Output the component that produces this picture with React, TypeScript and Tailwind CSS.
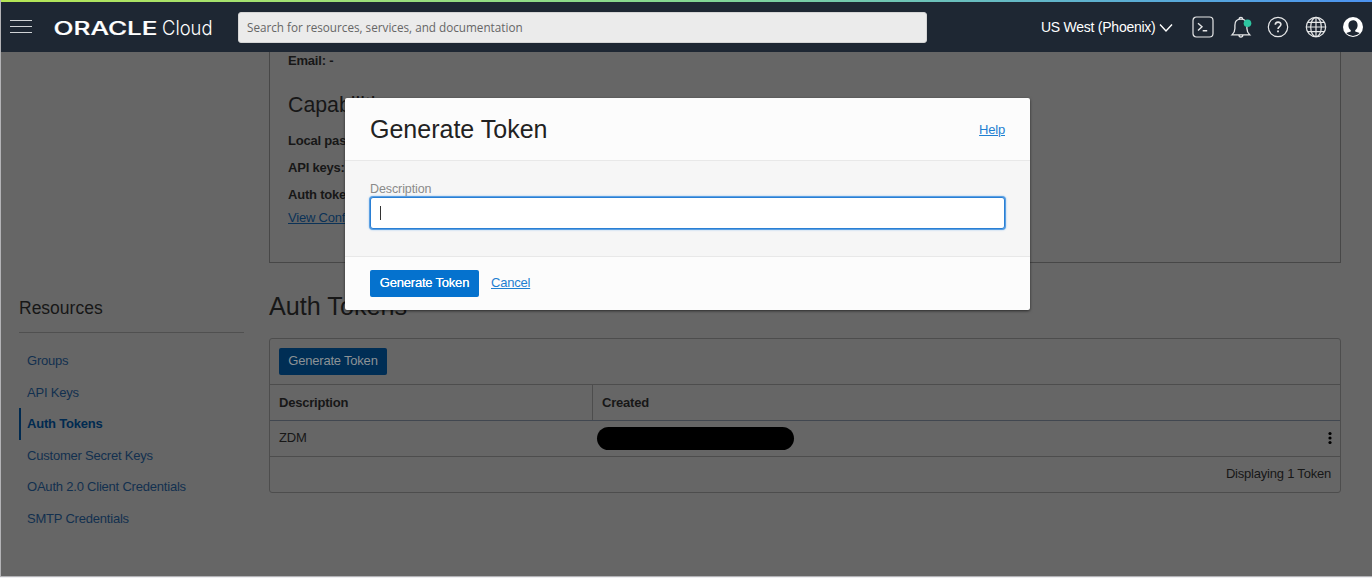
import React from "react";

const links = [
  { label: "Groups" },
  { label: "API Keys" },
  { label: "Auth Tokens", active: true },
  { label: "Customer Secret Keys" },
  { label: "OAuth 2.0 Client Credentials" },
  { label: "SMTP Credentials" },
];

function Header() {
  return (
    <header className="flex h-[50px] shrink-0 items-center bg-[#1e2733] text-white">
      <button aria-label="Menu" className="ml-[9px] flex w-[22px] flex-col gap-[5px] pb-px">
        <span className="h-px bg-[#d0d3d6]" />
        <span className="h-px bg-[#d0d3d6]" />
        <span className="h-px bg-[#d0d3d6]" />
      </button>
      <svg className="ml-[22px] shrink-0 overflow-visible" width="162" height="34" viewBox="0 0 162 34" fill="#fff">
        <text transform="translate(-0.500 24.500) scale(1.3 1)" fontFamily="Inter, sans-serif" fontSize="18" fontWeight="500" textLength="80" lengthAdjust="spacingAndGlyphs" stroke="#fff" strokeWidth="0.2">ORACLE</text>
        <text x="108" y="24.500" fontFamily="Inter, sans-serif" fontSize="20" fontWeight="300" textLength="50.500" lengthAdjust="spacingAndGlyphs">Cloud</text>
      </svg>
      <div className="ml-[22px] flex h-[31px] w-[689px] shrink-0 items-center rounded-[3px] border border-[#d5d5d5] bg-[#ebebeb] px-2 pt-[2px] font-['Open_Sans',sans-serif] text-[13px] text-[#666]">
        <span className="origin-left scale-x-[0.9] whitespace-nowrap">Search for resources, services, and documentation</span>
      </div>
      <div className="ml-[114px] flex items-center whitespace-nowrap text-[14px] tracking-[-0.25px]">
        <span className="w-[115px]">US West (Phoenix)</span>
        <svg className="ml-[3px] mt-[2px]" width="14" height="10" viewBox="0 0 14 10" fill="none" stroke="#fff" strokeWidth="1.4"><path d="M1 1.500 7 8l6-6.500" /></svg>
      </div>
      <div className="ml-[19px] flex shrink-0 items-center gap-[15.500px]">
        <svg width="22" height="22" viewBox="0 0 22 22" fill="none" stroke="#e6e7e8" strokeWidth="1.2"><rect x="1" y="1" width="20" height="20" rx="3.500" /><path d="m6 7.200 4 3.600-4 3.700M10.700 14.700h4.500" strokeWidth="1.400" /></svg>
        <svg className="overflow-visible" width="22" height="22" viewBox="0 0 22 22" fill="none" stroke="#e6e7e8" strokeWidth="1.3"><path d="M2 18.900h17.800c-2-2-2.900-4-2.900-6.500V9.200c0-3.700-2.300-6-6-6s-6 2.300-6 6v3.200c0 2.500-.9 4.500-2.900 6.500ZM9.100 3.300c0-2.700 3.600-2.700 3.600 0M8.900 19c.2 2.700 3.800 2.700 4 0" /><circle cx="17.500" cy="7.300" r="3.800" fill="#2dc5a0" stroke="none" /></svg>
        <svg width="22" height="22" viewBox="0 0 22 22" fill="none" stroke="#e6e7e8" strokeWidth="1.2"><circle cx="11" cy="11" r="9.700" /><path d="M8.300 8.800c0-3.700 5.600-3.500 5.600-.2 0 2-2.900 2.100-2.900 4.400" strokeWidth="1.600" /><path d="M11 14.500v1.700" strokeWidth="1.800" /></svg>
        <svg width="22" height="22" viewBox="0 0 22 22" fill="none" stroke="#e6e7e8" strokeWidth="1.2"><circle cx="11" cy="11" r="9.700" /><ellipse cx="11" cy="11" rx="5.300" ry="9.700" /><path d="M11 1.300v19.400M1.300 11h19.400M2.700 6.300h16.600M2.700 15.700h16.600" /></svg>
        <svg width="22" height="22" viewBox="0 0 22 22"><circle cx="11" cy="11" r="10" fill="#fff" /><path d="M11 4.200c-3.100 0-4.600 2.200-4.600 5 0 2.100.9 4 2.400 5v1.200l-4.500 1.700c3.700 3.700 9.700 3.700 13.400 0l-4.500-1.700v-1.200c1.500-1 2.400-2.900 2.400-5 0-2.800-1.500-5-4.600-5Z" fill="#1e2733" /></svg>
      </div>
    </header>
  );
}

function Sidebar() {
  return (
    <aside className="ml-[18px] w-[225px] shrink-0 pt-[242px]">
      <h2 className="h-[39px] border-b border-[#505050] text-[17.500px] leading-[28px] text-[#171717]">Resources</h2>
      <nav className="mt-[12px] text-[13px] tracking-[-0.21px] text-[#12304f]">
        {links.map((link) => (
          <a
            key={link.label}
            className={
              link.active
                ? "flex h-[31.500px] items-center border-l-2 border-[#002a50] pl-[6px] font-bold text-[#002a50]"
                : "flex h-[31.500px] items-center pl-2"
            }
          >
            {link.label}
          </a>
        ))}
      </nav>
    </aside>
  );
}

function Details() {
  return (
    <section className="h-[211px] border border-t-0 border-[#474747] pl-[18px] pt-px text-[13px] font-bold tracking-[-0.2px] text-[#171717]">
      <p className="h-[15px] leading-[15px]">Email: -</p>
      <h2 className="mt-[23px] h-[28px] text-[21.300px] font-normal leading-[28px] tracking-normal">Capabilities</h2>
      <p className="mt-[11px] leading-[22px]">Local pass</p>
      <p className="mt-[5px] leading-[22px]">API keys:</p>
      <p className="mt-[5px] leading-[22px]">Auth token</p>
      <a className="mt-[1px] block font-normal leading-[22px] text-[#0b3257] underline">View Confi</a>
    </section>
  );
}

function TokenTable() {
  return (
    <section className="mt-[29px] text-[13px] tracking-[-0.21px] text-[#171717]">
      <h1 className="h-[30px] text-[25.200px] leading-[28px] tracking-normal">Auth Tokens</h1>
      <div className="mt-[16px] rounded-[3px] border border-[#4d4d4d]">
        <div className="flex h-[46px] items-center border-b border-[#4d4d4d] pl-[9px]">
          <button className="h-[27px] w-[108px] rounded-[2px] bg-[#002e55] pb-px text-[#8c9296]">Generate Token</button>
        </div>
        <div className="flex h-[36px] border-b border-[#414750] font-bold">
          <div className="flex w-[323px] items-center border-r border-[#4d4d4d] pl-[9px]">Description</div>
          <div className="flex items-center pl-[9px]">Created</div>
        </div>
        <div className="flex h-[36px] items-center border-b border-[#4d4d4d] pb-px pl-[9px]">
          <span className="w-[317.500px]">ZDM</span>
          <span className="h-[23px] w-[197px] rounded-full bg-black" />
          <svg className="ml-auto mr-[8px]" width="4" height="14" viewBox="0 0 4 14"><circle cx="2" cy="2.500" r="1.600" /><circle cx="2" cy="7" r="1.600" /><circle cx="2" cy="11.500" r="1.600" /></svg>
        </div>
        <div className="flex h-[35px] items-center justify-end pb-px pr-[9px]">Displaying 1 Token</div>
      </div>
    </section>
  );
}

function Dialog() {
  return (
    <div role="dialog" className="absolute left-[344px] top-[98px] w-[685px] rounded-[2px] bg-[#fcfcfc] tracking-[-0.21px] shadow-[0_1px_3px_rgba(0,0,0,0.6)]">
      <div className="flex h-[63px] items-center justify-between border-b border-[#e8e8e8] px-[25px] pt-px">
        <h2 className="text-[25px] tracking-normal text-[#222]">Generate Token</h2>
        <a className="text-[13px] text-[#1f7fd1] underline">Help</a>
      </div>
      <div className="h-[96px] border-b border-[#e8e8e8] bg-[#f6f6f6] pl-[25px] pr-[25px] pt-[19px]">
        <label className="block h-[17px] text-[12.500px] leading-[18px] tracking-[-0.1px] text-[#8a8a8a]">Description</label>
        <div className="flex h-[32px] items-center rounded-[3px] border border-[#2a7fd4] bg-white pl-[9px] shadow-[0_0_0_1px_#5ba0e3,0_0_2px_1px_#9cc6f0]">
          <span className="h-[14px] w-px bg-[#333]" />
        </div>
      </div>
      <div className="flex h-[53px] items-center px-[25px]">
        <button className="h-[27px] w-[109px] rounded-[2px] bg-[#0572ce] pb-px text-[13px] text-white [text-shadow:0_0_0.5px_#fff]">Generate Token</button>
        <a className="ml-[12px] pb-px text-[13px] text-[#1f7fd1] underline">Cancel</a>
      </div>
    </div>
  );
}

export default function App() {
  return (
    <div className="h-[578px] w-[1372px] overflow-hidden border-b border-[#f0f0f3] font-['Liberation_Sans',Arial,sans-serif]">
      <div className="relative flex h-[577px] flex-col overflow-hidden border-b border-l border-[#b3b3b6] bg-[#666]">
        <div className="h-[2px] shrink-0 bg-linear-to-r from-[#b5e655] via-[#84d892] to-[#4c92f0]" />
        <Header />
        <div className="flex min-h-0 flex-1">
          <Sidebar />
          <main className="ml-[25px] w-[1072px]">
            <Details />
            <TokenTable />
          </main>
        </div>
        <Dialog />
      </div>
    </div>
  );
}
